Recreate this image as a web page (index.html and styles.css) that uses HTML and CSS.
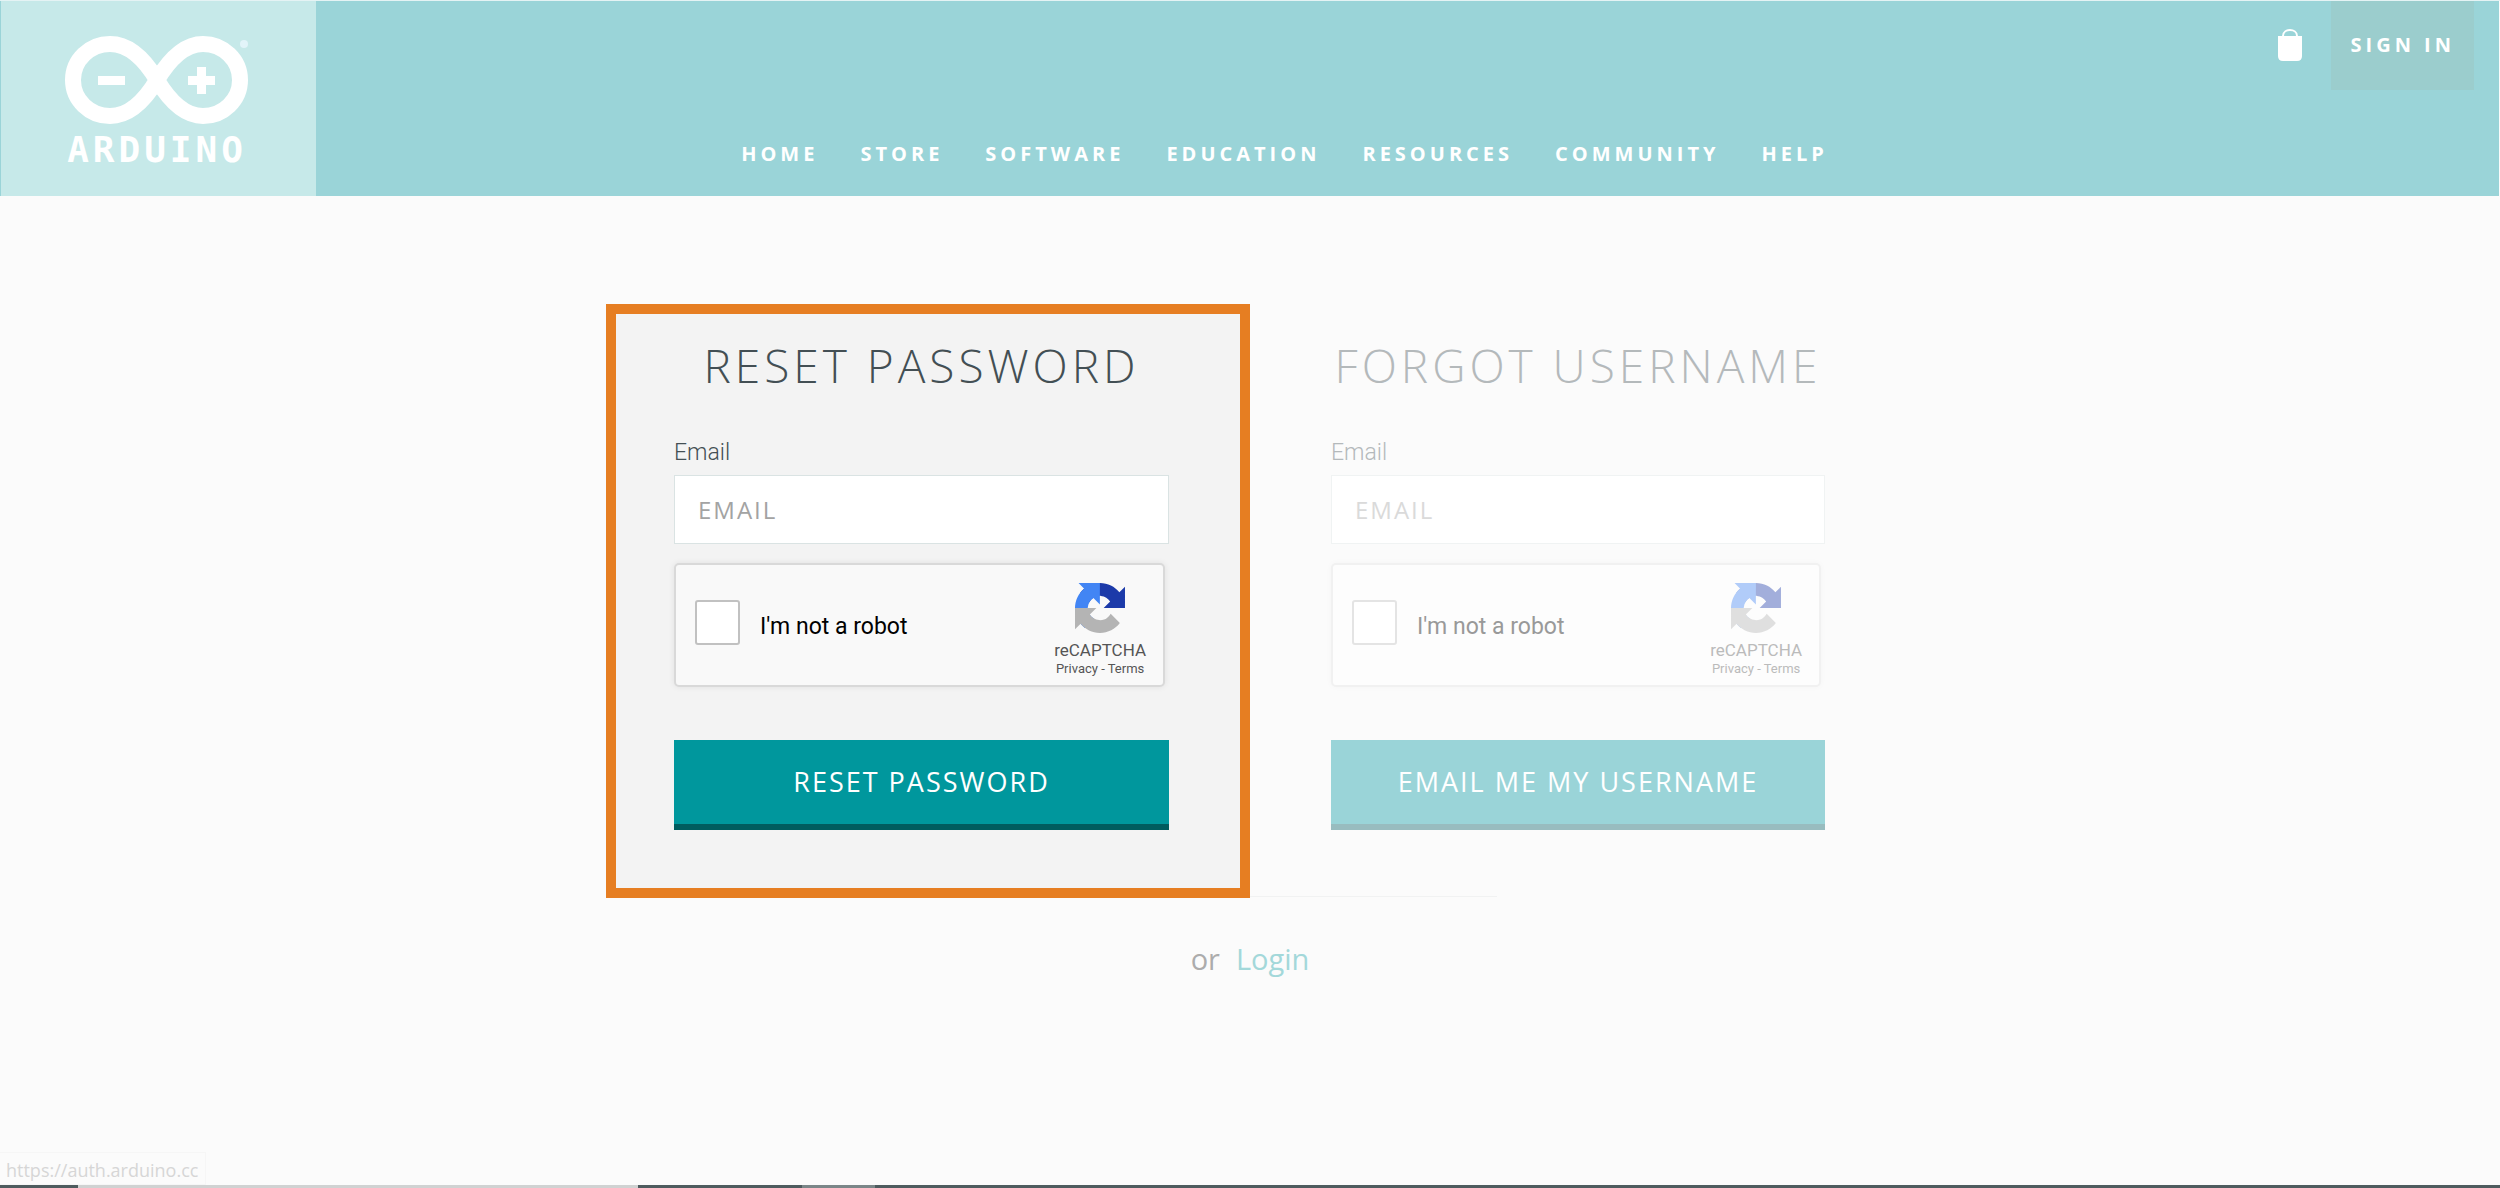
FILE: index.html
```html
<!DOCTYPE html>
<html lang="en">
<head>
  <meta charset="utf-8">
  <meta name="viewport" content="width=device-width, initial-scale=1">
  <title>Arduino - Reset password</title>
  <link rel="stylesheet" href="styles.css">
</head>
<body>
  <svg class="symbols" width="0" height="0" aria-hidden="true">
    <symbol id="recaptcha" viewBox="0 0 64 64">
      <path fill="#1c3aa9" d="M64 31.955l-.033-1.37V4.687l-7.16 7.16C50.948 4.674 42.033.093 32.05.093c-10.4 0-19.622 4.96-25.458 12.64l11.736 11.86a15.55 15.55 0 0 1 4.754-5.334c2.05-1.6 4.952-2.906 8.968-2.906.485 0 .86.057 1.135.163 4.976.393 9.288 3.14 11.828 7.124l-8.307 8.307L64 31.953"/>
      <path fill="#4285f4" d="M31.862.094l-1.37.033H4.594l7.16 7.16C4.58 13.147 0 22.06 0 32.046c0 10.4 4.96 19.622 12.64 25.458L24.5 45.768a15.55 15.55 0 0 1-5.334-4.754c-1.6-2.05-2.906-4.952-2.906-8.968 0-.485.057-.86.163-1.135.393-4.976 3.14-9.288 7.124-11.828l8.307 8.307L31.86.095"/>
      <path fill="#b4b4b4" d="M.001 32.045l.033 1.37v25.898l7.16-7.16c5.86 7.173 14.774 11.754 24.76 11.754 10.4 0 19.622-4.96 25.458-12.64l-11.736-11.86a15.55 15.55 0 0 1-4.754 5.334c-2.05 1.6-4.952 2.906-8.968 2.906-.485 0-.86-.057-1.135-.163-4.976-.393-9.288-3.14-11.828-7.124l8.307-8.307c-10.522.04-22.4.066-27.295-.005"/>
    </symbol>
  </svg>

  <header class="header">
    <a class="brand" href="#" aria-label="Arduino home">
      <svg class="brand-mark" viewBox="0 0 184 88" aria-hidden="true">
        <path fill="none" stroke="#fff" stroke-width="16" d="M92 44C80 24 64 8 45 8A37 36 0 0 0 45 80C64 80 80 64 92 44C104 24 119 8 138 8A37 36 0 0 1 138 80C119 80 104 64 92 44Z"/>
        <path fill="#fff" d="M33 40h27v9H33zM123 40h9v-9h9v9h9v9h-9v9h-9v-9h-9z"/>
        <circle cx="179" cy="8" r="4" fill="#e2f4f9"/>
      </svg>
      <span class="brand-name">ARDUINO</span>
    </a>
    <nav class="nav">
      <a href="#">HOME</a>
      <a href="#">STORE</a>
      <a href="#">SOFTWARE</a>
      <a href="#">EDUCATION</a>
      <a href="#">RESOURCES</a>
      <a href="#">COMMUNITY</a>
      <a href="#">HELP</a>
    </nav>
    <div class="account">
      <a class="bag" href="#" aria-label="Shopping bag">
        <svg width="24" height="32" viewBox="0 0 24 32" aria-hidden="true">
          <path fill="none" stroke="#fff" stroke-width="2" d="M5 7C5 -1 19 -1 19 7"/>
          <path fill="#fff" d="M0 7h24v20q0 5-5 5H5q-5 0-5-5z"/>
        </svg>
      </a>
      <a class="sign-in" href="#">SIGN IN</a>
    </div>
  </header>

  <main class="main">
    <div class="panels">
      <form class="panel panel-active">
        <h1 class="title">RESET PASSWORD</h1>
        <label class="label" for="reset-email">Email</label>
        <input class="field" id="reset-email" type="email" placeholder="EMAIL">
        <div class="captcha">
          <input class="tick" id="reset-robot" type="checkbox">
          <label class="robot" for="reset-robot">I'm not a robot</label>
          <div class="captcha-brand">
            <svg width="50" height="50" aria-hidden="true"><use href="#recaptcha"/></svg>
            <span class="captcha-name">reCAPTCHA</span>
            <span class="captcha-links"><a href="#">Privacy</a> - <a href="#">Terms</a></span>
          </div>
        </div>
        <button class="submit" type="button">RESET PASSWORD</button>
      </form>

      <form class="panel panel-muted">
        <h1 class="title">FORGOT USERNAME</h1>
        <label class="label" for="user-email">Email</label>
        <input class="field" id="user-email" type="email" placeholder="EMAIL">
        <div class="captcha">
          <input class="tick" id="user-robot" type="checkbox">
          <label class="robot" for="user-robot">I'm not a robot</label>
          <div class="captcha-brand">
            <svg width="50" height="50" aria-hidden="true"><use href="#recaptcha"/></svg>
            <span class="captcha-name">reCAPTCHA</span>
            <span class="captcha-links"><a href="#">Privacy</a> - <a href="#">Terms</a></span>
          </div>
        </div>
        <button class="submit" type="button">EMAIL ME MY USERNAME</button>
      </form>
    </div>
    <hr class="rule">
    <p class="login">or <a href="#">Login</a></p>
  </main>

  <footer class="footer">
    <div class="status">https://auth.arduino.cc</div>
    <div class="taskbar"><span></span><span></span><span></span><span></span><span></span></div>
  </footer>
</body>
</html>
```
FILE: styles.css
```css
* {
  box-sizing: border-box;
}

body {
  margin: 0;
  min-height: 100vh;
  display: flex;
  flex-direction: column;
  background: #fbfbfb;
  border-top: 1px solid #e4f3f4;
  font-family: "Open Sans", "Noto Sans", sans-serif;
}

a {
  color: inherit;
  text-decoration: none;
}

.symbols {
  display: none;
}

/* Header */

.header {
  display: grid;
  grid-template-columns: 1fr auto 1fr;
  min-height: 195px;
  margin-right: 1px;
  background: #9ad4d8;
  color: #fff;
}

.brand {
  justify-self: start;
  width: 316px;
  padding: 35px 3px 0 0;
  display: flex;
  flex-direction: column;
  align-items: center;
  background: #c6e9e9;
  border-left: 1px solid #9ad4d8;
}

.brand-mark {
  width: 184px;
  height: 88px;
}

.brand-name {
  margin-top: 4px;
  font: bold 36px/44px "DejaVu Sans Mono", monospace;
  letter-spacing: 4px;
}

.nav {
  align-self: end;
  display: flex;
  gap: 42px;
  padding: 0 0 28px 70px;
}

.nav a,
.sign-in {
  font-size: 20px;
  line-height: 28px;
  font-weight: 700;
  letter-spacing: 4px;
}

.account {
  justify-self: end;
  display: flex;
  align-items: flex-start;
  gap: 29px;
  padding-right: 25px;
}

.bag {
  display: flex;
  padding-top: 28px;
}

.sign-in {
  padding: 30px 19px 31px 20px;
  background: #9bcdcd;
}

/* Forms */

.main {
  flex: 1;
  padding-top: 108px;
}

.panels {
  position: relative;
  display: grid;
  grid-template-columns: 1fr 1fr;
  max-width: 1288px;
  margin: 0 auto;
}

.panel {
  display: flex;
  flex-direction: column;
  border: 10px solid transparent;
  padding: 21px 59px 58px 71px;
}

.panel-active {
  padding-right: 71px;
  padding-left: 58px;
  background: #f3f3f3;
  border-color: #e67e22;
}

.title {
  margin: 0 0 44px;
  font-size: 46px;
  line-height: 60px;
  font-weight: 300;
  letter-spacing: 4px;
  text-align: center;
  white-space: nowrap;
  color: #434f54;
}

.label {
  font: 300 23px/28px Roboto, sans-serif;
  color: #434f54;
}

.field {
  width: 100%;
  height: 69px;
  margin: 8px 0 19px;
  padding: 0 23px;
  border: 1px solid #dae3e3;
  border-radius: 0;
  background: #fff;
  font: 400 24px/32px "Open Sans", sans-serif;
  letter-spacing: 2px;
}

.field::placeholder {
  color: #a3a3a3;
  opacity: 1;
}

.captcha {
  display: flex;
  height: 124px;
  margin: 0 4px 53px 0;
  padding: 0 17px 0 19px;
  background: #f9f9f9;
  border: 2px solid #d9d9d9;
  border-radius: 5px;
  box-shadow: 0 0 6px rgba(0, 0, 0, 0.08);
}

.tick {
  appearance: none;
  width: 45px;
  height: 45px;
  margin: 35px 20px 0 0;
  background: #fff;
  border: 2px solid #c1c1c1;
  border-radius: 3px;
}

.robot {
  flex: 1;
  padding-top: 47px;
  font: 400 23px/30px Roboto, sans-serif;
  color: #000;
}

.captcha-brand {
  display: flex;
  flex-direction: column;
  align-items: center;
  padding-top: 18px;
  font-family: Roboto, sans-serif;
  color: #555;
}

.captcha-name {
  margin-top: 7px;
  font-size: 17px;
  line-height: 20px;
}

.captcha-links {
  font-size: 13px;
  line-height: 18px;
}

.submit {
  height: 90px;
  padding: 0;
  border: 0;
  border-bottom: 6px solid #005c5f;
  background: #00979d;
  font: 500 27px/36px "Open Sans", sans-serif;
  letter-spacing: 2px;
  color: #fff;
}

/* Inactive form */

.panel-muted .title,
.panel-muted .label {
  color: #b4b9bb;
}

.panel-muted .field {
  border-color: #f0f3f3;
}

.panel-muted .field::placeholder {
  color: #dadada;
}

.panel-muted .captcha {
  background: #fdfdfd;
  border-color: #f1f1f1;
  box-shadow: 0 0 6px rgba(0, 0, 0, 0.03);
}

.panel-muted .tick {
  border-color: #e4e4e4;
}

.panel-muted .robot {
  color: #999;
}

.panel-muted .captcha-brand {
  color: #bbb;
}

.panel-muted svg {
  opacity: 0.4;
}

.panel-muted .submit {
  background: #9ad4d8;
  border-color: #98bcbf;
}

/* Below the forms */

.rule {
  width: 494px;
  margin: -2px auto 0;
  border: 0;
  border-top: 1px solid #f1f2f2;
}

.login {
  display: flex;
  justify-content: center;
  gap: 16px;
  margin: 42px 0 0;
  font-size: 29px;
  line-height: 40px;
  font-weight: 500;
  color: #acacac;
}

.login a {
  color: #a3d8da;
}

/* Bottom edge */

.status {
  width: max-content;
  padding: 4px 7px 1px 6px;
  border: 1px solid #f6f6f6;
  border-left: 0;
  font-size: 18px;
  line-height: 26px;
  color: #d6d6d6;
}

.taskbar {
  display: grid;
  grid-template-columns: 78px 560px 164px 73px 1fr;
  height: 3px;
  background: #4e5b5e;
}

.taskbar span:nth-child(2) {
  background: #d0d2d2;
}

.taskbar span:nth-child(4) {
  background: #7b8688;
}
```
